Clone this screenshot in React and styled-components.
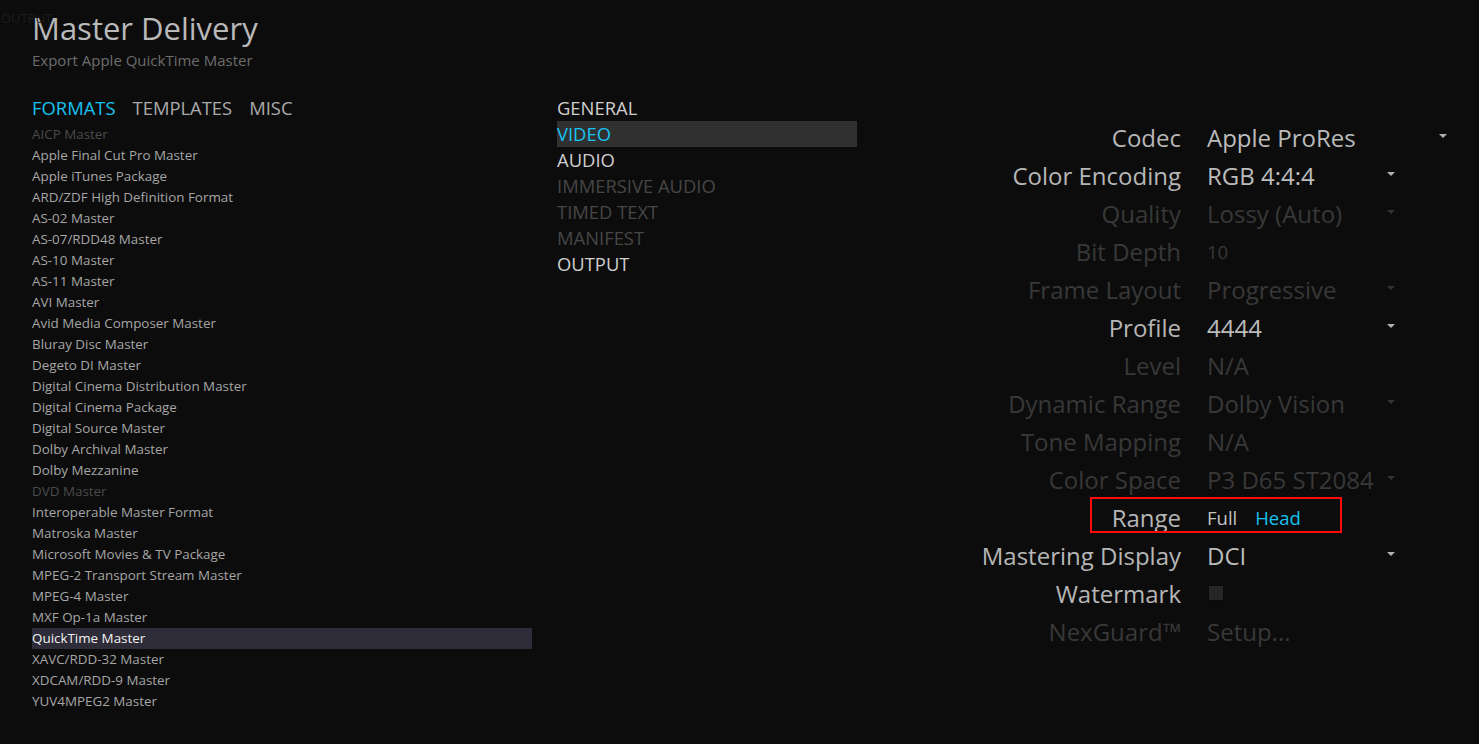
import React from 'react'
import styled, { createGlobalStyle } from 'styled-components'

const FORMATS = [
  { name: 'AICP Master', disabled: true },
  { name: 'Apple Final Cut Pro Master' },
  { name: 'Apple iTunes Package' },
  { name: 'ARD/ZDF High Definition Format' },
  { name: 'AS-02 Master' },
  { name: 'AS-07/RDD48 Master' },
  { name: 'AS-10 Master' },
  { name: 'AS-11 Master' },
  { name: 'AVI Master' },
  { name: 'Avid Media Composer Master' },
  { name: 'Bluray Disc Master' },
  { name: 'Degeto DI Master' },
  { name: 'Digital Cinema Distribution Master' },
  { name: 'Digital Cinema Package' },
  { name: 'Digital Source Master' },
  { name: 'Dolby Archival Master' },
  { name: 'Dolby Mezzanine' },
  { name: 'DVD Master', disabled: true },
  { name: 'Interoperable Master Format' },
  { name: 'Matroska Master' },
  { name: 'Microsoft Movies & TV Package' },
  { name: 'MPEG-2 Transport Stream Master' },
  { name: 'MPEG-4 Master' },
  { name: 'MXF Op-1a Master' },
  { name: 'QuickTime Master', selected: true },
  { name: 'XAVC/RDD-32 Master' },
  { name: 'XDCAM/RDD-9 Master' },
  { name: 'YUV4MPEG2 Master' }
]

const SECTIONS = [
  { name: 'GENERAL' },
  { name: 'VIDEO', selected: true },
  { name: 'AUDIO' },
  { name: 'IMMERSIVE AUDIO', disabled: true },
  { name: 'TIMED TEXT', disabled: true },
  { name: 'MANIFEST', disabled: true },
  { name: 'OUTPUT' }
]

const SETTINGS = [
  { label: 'Codec', value: 'Apple ProRes', type: 'select', wide: true },
  { label: 'Color Encoding', value: 'RGB 4:4:4', type: 'select' },
  { label: 'Quality', value: 'Lossy (Auto)', type: 'select', disabled: true },
  { label: 'Bit Depth', value: '10', type: 'small', disabled: true },
  { label: 'Frame Layout', value: 'Progressive', type: 'select', disabled: true },
  { label: 'Profile', value: '4444', type: 'select' },
  { label: 'Level', value: 'N/A', type: 'text', disabled: true },
  { label: 'Dynamic Range', value: 'Dolby Vision', type: 'select', disabled: true },
  { label: 'Tone Mapping', value: 'N/A', type: 'text', disabled: true },
  { label: 'Color Space', value: 'P3 D65 ST2084', type: 'select', disabled: true },
  { label: 'Range', type: 'toggle', highlight: true },
  { label: 'Mastering Display', value: 'DCI', type: 'select' },
  { label: 'Watermark', type: 'checkbox' },
  { label: 'NexGuard™', value: 'Setup...', type: 'text', disabled: true }
]

const renderValue = setting => {
  if (setting.type === 'select') {
    return (
      <Dropdown $wide={setting.wide} $disabled={setting.disabled}>
        {setting.value}
        <Arrow $disabled={setting.disabled} />
      </Dropdown>
    )
  }
  if (setting.type === 'toggle') {
    return (
      <Toggle>
        <ToggleOption>Full</ToggleOption>
        <ToggleOption $active>Head</ToggleOption>
      </Toggle>
    )
  }
  if (setting.type === 'checkbox') {
    return <Checkbox />
  }
  return (
    <Value $small={setting.type === 'small'} $disabled={setting.disabled}>
      {setting.value}
    </Value>
  )
}

const App = () => {
  return (
    <Page>
      <GlobalStyle />
      <GhostTitle>OUTPUT</GhostTitle>
      <Header>
        <Title>Master Delivery</Title>
        <Subtitle>Export Apple QuickTime Master</Subtitle>
      </Header>
      <Body>
        <LeftColumn>
          <Tabs>
            <Tab $active>FORMATS</Tab>
            <Tab>TEMPLATES</Tab>
            <Tab>MISC</Tab>
          </Tabs>
          <FormatList>
            {FORMATS.map(format => (
              <FormatItem
                key={format.name}
                $selected={format.selected}
                $disabled={format.disabled}
              >
                {format.name}
              </FormatItem>
            ))}
          </FormatList>
        </LeftColumn>
        <SectionList>
          {SECTIONS.map(section => (
            <SectionItem
              key={section.name}
              $selected={section.selected}
              $disabled={section.disabled}
            >
              {section.name}
            </SectionItem>
          ))}
        </SectionList>
        <Settings>
          {SETTINGS.map(setting => (
            <SettingRow key={setting.label}>
              <Label $disabled={setting.disabled}>{setting.label}</Label>
              {renderValue(setting)}
              {setting.highlight && <Highlight />}
            </SettingRow>
          ))}
        </Settings>
      </Body>
    </Page>
  )
}

export default App

const GlobalStyle = createGlobalStyle`
  html, body {
    margin: 0;
    padding: 0;
    background: #0c0c0c;
  }
  body {
    font-family: "Open Sans", "Noto Sans", sans-serif;
  }
`
const Page = styled.div`
  position: relative;
  width: 1479px;
  height: 744px;
  padding-left: 32px;
  box-sizing: border-box;
  background: #0c0c0c;
  overflow: hidden;
`
const GhostTitle = styled.div`
  position: absolute;
  left: 1px;
  top: 9px;
  font-size: 13px;
  color: #1d1d1d;
`
const Header = styled.div`
  padding-top: 8px;
`
const Title = styled.div`
  font-size: 31px;
  line-height: 40px;
  color: #b9b9b9;
`
const Subtitle = styled.div`
  margin-top: 2px;
  font-size: 15px;
  line-height: 20px;
  color: #6c6c6c;
`
const Body = styled.div`
  display: flex;
  margin-top: 25px;
`
const LeftColumn = styled.div`
  width: 500px;
  flex-shrink: 0;
`
const Tabs = styled.div`
  display: flex;
  gap: 17px;
  height: 29px;
`
const Tab = styled.div`
  font-size: 18.4px;
  line-height: 26px;
  color: ${p => (p.$active ? '#16c2f1' : '#a9a9a9')};
`
const FormatList = styled.div`
  display: flex;
  flex-direction: column;
`
const FormatItem = styled.div`
  height: 21px;
  line-height: 21px;
  font-size: 13.4px;
  color: ${p => (p.$selected ? '#f2f2f2' : p.$disabled ? '#4b4b4b' : '#a6a6a6')};
  background: ${p => (p.$selected ? '#2d2c38' : 'transparent')};
`
const SectionList = styled.div`
  width: 300px;
  flex-shrink: 0;
  margin-left: 25px;
`
const SectionItem = styled.div`
  height: 26px;
  line-height: 26px;
  font-size: 18.4px;
  color: ${p => (p.$selected ? '#16c2f1' : p.$disabled ? '#464646' : '#cfcfcf')};
  background: ${p => (p.$selected ? '#303030' : 'transparent')};
`
const Settings = styled.div`
  flex: 1;
  margin-top: 23px;
`
const SettingRow = styled.div`
  position: relative;
  display: flex;
  align-items: center;
  gap: 26px;
  height: 38px;
`
const Label = styled.div`
  width: 324px;
  flex-shrink: 0;
  text-align: right;
  font-size: 24px;
  color: ${p => (p.$disabled ? '#383838' : '#b6b6b6')};
`
const Value = styled.div`
  font-size: ${p => (p.$small ? '18.5px' : '24px')};
  color: ${p => (p.$disabled ? '#383838' : '#bbbbbb')};
`
const Dropdown = styled.div`
  display: flex;
  align-items: center;
  justify-content: space-between;
  width: ${p => (p.$wide ? '240px' : '188px')};
  font-size: 24px;
  color: ${p => (p.$disabled ? '#383838' : '#bbbbbb')};
`
const Arrow = styled.span`
  width: 0;
  height: 0;
  border-left: 4px solid transparent;
  border-right: 4px solid transparent;
  border-top: 4px solid ${p => (p.$disabled ? '#333333' : '#b0b0b0')};
  margin-bottom: 2px;
`
const Toggle = styled.div`
  display: flex;
  gap: 18px;
  font-size: 18.5px;
`
const ToggleOption = styled.span`
  color: ${p => (p.$active ? '#16c2f1' : '#c4c4c4')};
`
const Checkbox = styled.div`
  width: 14px;
  height: 14px;
  margin-left: 1px;
  background: #262626;
  border: 1px solid #0a0a0a;
`
const Highlight = styled.div`
  position: absolute;
  left: 233px;
  top: -1px;
  width: 252px;
  height: 36px;
  box-sizing: border-box;
  border: 2px solid #ff0a0a;
  pointer-events: none;
`
